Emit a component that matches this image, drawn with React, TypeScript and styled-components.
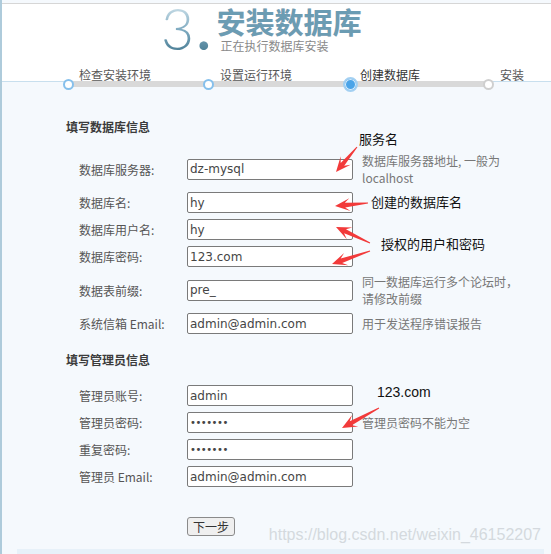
import React from 'react'
import styled, { createGlobalStyle } from 'styled-components'

const GlobalStyle = createGlobalStyle`
  html, body {
    margin: 0;
    padding: 0;
    background: #ffffff;
  }
  body {
    font-family: "Noto Sans CJK SC", "Noto Sans", sans-serif;
  }
`

const Screen = styled.div`
  position: relative;
  width: 551px;
  height: 554px;
  overflow: hidden;
`

const Page = styled.div`
  box-sizing: border-box;
  width: 100%;
  height: 100%;
  border-left: 2px solid #aecbdb;
  background: #f5f9fd;
  display: flex;
  flex-direction: column;
`

const Header = styled.header`
  margin-top: 3px;
  height: 77px;
  border-top: 1px solid #d6d6d6;
  border-bottom: 1px solid #c8dfee;
  background: #ffffff;
  display: flex;
  flex-direction: column;
`

const Hero = styled.div`
  height: 62px;
  padding-left: 159px;
  display: flex;
  align-items: flex-start;
`

const Numeral = styled.div`
  margin-top: -10px;
  height: 72px;
  margin-bottom: -10px;
  font-family: Lato, "DejaVu Sans", sans-serif;
  font-weight: 300;
  font-size: 57px;
  line-height: 68px;
  background: linear-gradient(180deg, #c2d9e4 0%, #c2d9e4 20%, #7eaac0 50%, #44788f 85%);
  -webkit-background-clip: text;
  background-clip: text;
  color: transparent;
`

const Dot = styled.span`
  font-weight: 700;
  margin-left: 3px;
`

const TitleBlock = styled.div`
  margin-left: 6px;
  margin-top: 1px;
  display: flex;
  flex-direction: column;
`

const Title = styled.h1`
  margin: 0;
  font-size: 29px;
  line-height: 33px;
  font-weight: 700;
  color: #6b9cb3;
  text-shadow: 0.5px 0 0 rgba(190, 130, 140, 0.35);
`

const Subtitle = styled.div`
  margin-left: 4px;
  font-size: 12px;
  line-height: 16px;
  color: #8a8a8a;
`

const StepLabels = styled.div`
  display: grid;
  grid-template-columns: 141px 140px 140px auto;
  padding: 2px 0 0 77px;
  height: 13px;
  font-size: 12px;
  line-height: 13px;
`

const StepLabel = styled.span<{ $active?: boolean }>`
  color: ${p => (p.$active ? '#333333' : '#575757')};
`

const Track = styled.div`
  margin-top: -1px;
  height: 6px;
  padding-left: 61px;
  display: flex;
  align-items: center;
`

const Segment = styled.div<{ $w: number }>`
  flex: none;
  width: ${p => p.$w + 8}px;
  height: 6px;
  margin: 0 -4px;
  background: #d9d9d9;
`

const Circle = styled.div<{ $state: 'done' | 'active' | 'todo' }>`
  flex: none;
  position: relative;
  z-index: 1;
  box-sizing: border-box;
  width: ${p => (p.$state === 'active' ? 15 : 11)}px;
  height: ${p => (p.$state === 'active' ? 15 : 11)}px;
  border-radius: 50%;
  border: 2px solid
    ${p => (p.$state === 'todo' ? '#cfcfcf' : p.$state === 'active' ? '#a3d0f2' : '#86c0ec')};
  background: ${p => (p.$state === 'active' ? '#4ba4e8' : '#ffffff')};
  box-shadow: ${p => (p.$state === 'active' ? 'inset 0 0 0 1px #d8ecfb' : 'none')};
`

const Form = styled.main`
  flex: 1;
  padding: 32px 0 0 64px;
`

const SectionTitle = styled.h2<{ $gap?: number }>`
  margin: ${p => p.$gap ?? 0}px 0 17px;
  font-size: 12px;
  line-height: 16px;
  font-weight: 700;
  color: #3c3c3c;
`

const Rows = styled.div`
  margin-left: 13px;
  display: flex;
  flex-direction: column;
  gap: 6px;
`

const Row = styled.div`
  display: grid;
  grid-template-columns: 108px 166px 176px;
  align-items: center;
`

const Label = styled.label`
  font-size: 12px;
  line-height: 17px;
  color: #555555;
`

const Field = styled.input<{ $dots?: boolean }>`
  box-sizing: border-box;
  width: 166px;
  height: 21px;
  margin: 0;
  padding: 0 2px;
  border: 1px solid #7a7a7a;
  border-radius: 2px;
  background: #ffffff;
  font-family: "DejaVu Sans", Verdana, sans-serif;
  font-size: ${p => (p.$dots ? 10 : 12)}px;
  letter-spacing: ${p => (p.$dots ? '-0.5px' : 'normal')};
  color: #454545;
  outline: none;
`

const Help = styled.div`
  margin-left: 9px;
  font-size: 12px;
  line-height: 17px;
  color: #777777;
`

const Actions = styled.div`
  margin: 26px 0 0 121px;
`

const NextButton = styled.button`
  box-sizing: border-box;
  height: 19px;
  padding: 0 5px;
  border: 1px solid #8a8a8a;
  border-radius: 3px;
  background: #efefef;
  font-family: "Noto Sans CJK SC", sans-serif;
  font-size: 12px;
  line-height: 17px;
  color: #333333;
`

const FooterStrip = styled.div`
  margin-left: 15px;
  width: 527px;
  height: 5px;
  background: #e7f1f9;
`

const Note = styled.span<{ $x: number; $y: number; $latin?: boolean }>`
  position: absolute;
  left: ${p => p.$x}px;
  top: ${p => p.$y}px;
  font-family: ${p => (p.$latin ? '"Liberation Sans", Arial, sans-serif' : '"Noto Sans CJK SC", sans-serif')};
  font-size: ${p => (p.$latin ? 14 : 13)}px;
  line-height: 16px;
  color: #111111;
  white-space: nowrap;
`

const Watermark = styled.div`
  position: absolute;
  right: 10px;
  top: 526px;
  font-family: "Liberation Sans", Arial, sans-serif;
  font-size: 16px;
  line-height: 18px;
  color: #d4d9de;
`

const Arrows = styled.svg`
  position: absolute;
  left: 0;
  top: 0;
  pointer-events: none;
`

const arrowPoints = (x1: number, y1: number, x2: number, y2: number) => {
  const dx = x2 - x1
  const dy = y2 - y1
  const len = Math.hypot(dx, dy)
  const ux = dx / len
  const uy = dy / len
  const nx = -uy
  const ny = ux
  const at = (t: number, w: number) => [x2 - ux * t + nx * w, y2 - uy * t + ny * w]
  const pts = [at(len, 0.5), at(10, 2.3), at(15, 6.5), [x2, y2], at(15, -6.5), at(10, -2.3), at(len, -0.5)]
  return pts.map(p => p.map(v => v.toFixed(1)).join(',')).join(' ')
}

const arrows: [number, number, number, number][] = [
  [357, 147, 336, 172],
  [368, 203, 335, 206],
  [370, 243, 336, 227],
  [370, 251, 332, 264],
  [379, 408, 342, 428],
]

type Item = { label: string; value: string; help?: React.ReactNode; password?: boolean }

const dbFields: Item[] = [
  { label: '数据库服务器:', value: 'dz-mysql', help: '数据库服务器地址, 一般为 localhost' },
  { label: '数据库名:', value: 'hy' },
  { label: '数据库用户名:', value: 'hy' },
  { label: '数据库密码:', value: '123.com' },
  { label: '数据表前缀:', value: 'pre_', help: '同一数据库运行多个论坛时，请修改前缀' },
  { label: '系统信箱 Email:', value: 'admin@admin.com', help: '用于发送程序错误报告' },
]

const adminFields: Item[] = [
  { label: '管理员账号:', value: 'admin' },
  { label: '管理员密码:', value: '1234567', password: true, help: '管理员密码不能为空' },
  { label: '重复密码:', value: '1234567', password: true },
  { label: '管理员 Email:', value: 'admin@admin.com' },
]

const FieldRows = ({ items }: { items: Item[] }) => (
  <Rows>
    {items.map(item => (
      <Row key={item.label}>
        <Label>{item.label}</Label>
        <Field
          readOnly
          $dots={item.password}
          type={item.password ? 'password' : 'text'}
          defaultValue={item.value}
        />
        <Help>{item.help}</Help>
      </Row>
    ))}
  </Rows>
)

export default function App() {
  return (
    <>
      <GlobalStyle />
      <Screen>
        <Page>
          <Header>
            <Hero>
              <Numeral>
                3<Dot>.</Dot>
              </Numeral>
              <TitleBlock>
                <Title>安装数据库</Title>
                <Subtitle>正在执行数据库安装</Subtitle>
              </TitleBlock>
            </Hero>
            <StepLabels>
              <StepLabel>检查安装环境</StepLabel>
              <StepLabel>设置运行环境</StepLabel>
              <StepLabel $active>创建数据库</StepLabel>
              <StepLabel>安装</StepLabel>
            </StepLabels>
          </Header>
          <Track>
            <Circle $state="done" />
            <Segment $w={129} />
            <Circle $state="done" />
            <Segment $w={129} />
            <Circle $state="active" />
            <Segment $w={125} />
            <Circle $state="todo" />
          </Track>

          <Form>
            <SectionTitle>填写数据库信息</SectionTitle>
            <FieldRows items={dbFields} />
            <SectionTitle $gap={18}>填写管理员信息</SectionTitle>
            <FieldRows items={adminFields} />
            <Actions>
              <NextButton type="button">下一步</NextButton>
            </Actions>
          </Form>
          <FooterStrip />
        </Page>

        <Arrows width={551} height={554} viewBox="0 0 551 554">
          {arrows.map((a, i) => (
            <polygon key={i} points={arrowPoints(...a)} fill="#f23a3a" />
          ))}
        </Arrows>
        <Note $x={359} $y={131}>服务名</Note>
        <Note $x={371} $y={194}>创建的数据库名</Note>
        <Note $x={381} $y={236}>授权的用户和密码</Note>
        <Note $x={377} $y={384} $latin>123.com</Note>
        <Watermark>https://blog.csdn.net/weixin_46152207</Watermark>
      </Screen>
    </>
  )
}
